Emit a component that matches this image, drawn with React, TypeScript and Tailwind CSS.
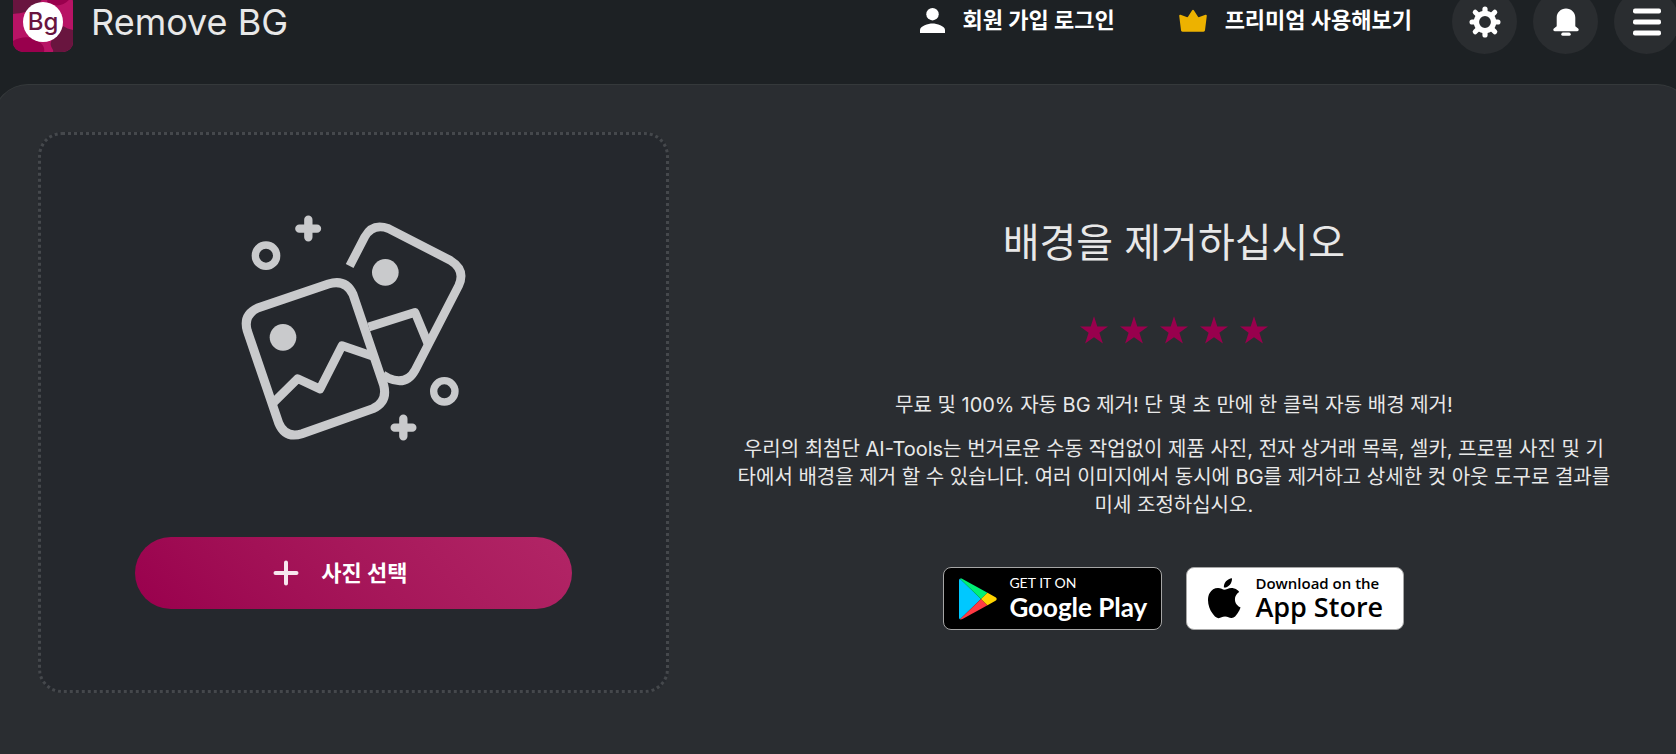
import type { ReactNode } from 'react'

interface IconProps {
  className?: string
}

function UserIcon({ className }: IconProps): ReactNode {
  return (
    <svg className={className} viewBox="0 0 25 25" fill="currentColor" aria-hidden="true">
      <circle cx="12.5" cy="6.2" r="6.2" />
      <path d="M0 25v-3c0-4.200 8.300-6.600 12.500-6.600S25 17.800 25 22v3z" />
    </svg>
  )
}

function CrownIcon({ className }: IconProps): ReactNode {
  return (
    <svg className={className} viewBox="0 0 28 24" fill="currentColor" aria-hidden="true">
      <path d="M13 1.500a1.200 1.200 0 0 1 2 0l4 6.300c.3.500.8.600 1.300.3L26.500 5.800c.7-.3 1.400.2 1.300 1L26 21.300c-.1.900-.6 1.400-1.500 1.400h-21c-.9 0-1.400-.5-1.500-1.400L.2 6.800c-.1-.8.600-1.300 1.300-1l6.200 2.300c.5.3 1 .2 1.300-.3z" />
    </svg>
  )
}

function GearIcon({ className }: IconProps): ReactNode {
  return (
    <svg className={className} viewBox="-16 -16 32 32" fill="none" aria-hidden="true">
      <circle r="8.600" stroke="currentColor" strokeWidth="5.400" />
      <g stroke="currentColor" strokeWidth="5.200" strokeLinecap="round">
        <path d="M0-10V-12.900M0 10V12.900M-10 0H-12.900M10 0H12.900" />
        <path d="M7.500-7.500 9.800-9.800M7.500 7.500 9.800 9.800M-7.500-7.500-9.800-9.800M-7.500 7.500-9.800 9.800" strokeWidth="5" />
      </g>
    </svg>
  )
}

function BellIcon({ className }: IconProps): ReactNode {
  return (
    <svg className={className} viewBox="0 0 26 28" fill="currentColor" aria-hidden="true">
      <path d="M13 .5c5.200 0 9.300 4 9.300 9.200v8.500l2.800 2.400c1.100 1 .6 2.700-.9 2.700H1.800c-1.500 0-2-1.700-.9-2.700l2.800-2.400V9.700C3.700 4.500 7.800.5 13 .5z" />
      <rect x="8.300" y="24.600" width="9.400" height="3.200" rx="1.600" />
    </svg>
  )
}

function MenuIcon({ className }: IconProps): ReactNode {
  return (
    <svg className={className} viewBox="0 0 28 28" fill="currentColor" aria-hidden="true">
      <rect y="0.500" width="28" height="5" rx="2" />
      <rect y="11.500" width="28" height="5" rx="2" />
      <rect y="22.500" width="28" height="5" rx="2" />
    </svg>
  )
}

function PlusIcon({ className }: IconProps): ReactNode {
  return (
    <svg className={className} viewBox="0 0 26 26" stroke="currentColor" strokeWidth="4" strokeLinecap="round" aria-hidden="true">
      <path d="M13 2.500v21M2.500 13h21" />
    </svg>
  )
}

function StarIcon({ className }: IconProps): ReactNode {
  return (
    <svg className={className} viewBox="0 0 28 28" fill="currentColor" aria-hidden="true">
      <path d="M14 .2l3.300 10.200h10.700l-8.600 6.300L22.900 27.600 14 21.200 5.100 27.600l3.500-10.900L0 10.400h10.700z" />
    </svg>
  )
}

function Logo(): ReactNode {
  return (
    <span className="relative flex size-15 shrink-0 items-center justify-center overflow-hidden rounded-[10px] bg-[#b81365]">
      <svg className="absolute inset-0 size-full" viewBox="0 0 60 60" aria-hidden="true">
        <path d="M0 0h31c-1 5-2 9-6 13-7 7-16 8-25 9z" fill="#69153f" />
        <path d="M34 10c8 6 19 4 24-5l2-5H36z" fill="#99004d" />
        <path d="M60 38c-4-1-7-2-10-4-4 9-14 12-12 20 1 3 3 4 2 6h20z" fill="#69153f" />
        <path d="M0 49c8-5 19-5 25 0 5 3 7 7 6 11H0z" fill="#99004d" />
      </svg>
      <span className="relative flex size-10 items-center justify-center rounded-full bg-white text-2xl leading-none font-medium text-[#69153f]">
        Bg
      </span>
    </span>
  )
}

function PhotosIllustration({ className }: IconProps): ReactNode {
  return (
    <svg className={className} viewBox="56 40 690 690" fill="none" stroke="#c9cacc" aria-hidden="true">
      {/* front photo */}
      <path
        d="M115 325 327 253Q379 237 401 284L493 556Q506 606 461 627L248 702Q198 718 178 670L84 394Q70 346 115 325Z"
        strokeWidth="27"
      />
      <path d="M160 611 235 537 302 568 368 438 462 470" strokeWidth="26" strokeLinejoin="round" />
      <circle cx="191" cy="413" r="40" fill="#c9cacc" stroke="none" />
      {/* back photo */}
      <path
        d="M391 199 436 112Q460 69 508 87L693 182Q740 211 718 258L588 510Q562 559 508 536L491 526"
        strokeWidth="26"
      />
      <path d="M448 382 587 338 625 430" strokeWidth="26" strokeLinejoin="round" />
      <circle cx="498" cy="218" r="40" fill="#c9cacc" stroke="none" />
      {/* sparkles */}
      <circle cx="140" cy="168" r="32" strokeWidth="22" />
      <circle cx="675" cy="575" r="32" strokeWidth="22" />
      <path d="M267 60v53M240 87h53M552 657v53M526 684h53" strokeWidth="25" strokeLinecap="round" />
    </svg>
  )
}

function PlayLogo({ className }: IconProps): ReactNode {
  return (
    <svg className={className} viewBox="0 0 38 42" aria-hidden="true">
      <path d="M1 .8C.3 1.200 0 1.800 0 2.800v36.400c0 1 .3 1.600 1 2L22 21z" fill="#00c8ff" />
      <path d="M1 .8c.7-.4 1.500-.3 2.500.2L28.500 14.800 22 21z" fill="#00f076" />
      <path d="M1 41.200c.7.400 1.500.3 2.500-.2L28.500 27.200 22 21z" fill="#ff3a44" />
      <path d="M28.500 14.800 36.500 19.300c1.600.9 1.600 2.500 0 3.400L28.500 27.200 22 21z" fill="#ffd400" />
    </svg>
  )
}

function AppleLogo({ className }: IconProps): ReactNode {
  return (
    <svg className={className} viewBox="2 1 31 39" fill="currentColor" aria-hidden="true">
      <path d="M27.900 21.500c-.1-4.800 3.900-7.100 4.100-7.200-2.200-3.300-5.700-3.700-6.900-3.800-2.900-.3-5.700 1.700-7.200 1.700s-3.800-1.700-6.200-1.600c-3.200 0-6.200 1.900-7.800 4.700-3.400 5.800-.9 14.400 2.400 19.100 1.600 2.300 3.500 4.900 6 4.800 2.400-.1 3.300-1.600 6.200-1.600s3.700 1.600 6.300 1.500c2.600 0 4.200-2.300 5.800-4.700 1.800-2.700 2.600-5.300 2.600-5.400-.1 0-5.200-2-5.300-7.500z" />
      <path d="M23.100 7.400C24.400 5.800 25.300 3.500 25.100 1.200c-2 .1-4.300 1.300-5.700 2.900-1.200 1.400-2.300 3.800-2 6 2.200.2 4.400-1.100 5.700-2.700z" />
    </svg>
  )
}

interface RoundButtonProps {
  label: string
  children: ReactNode
}

function RoundButton({ label, children }: RoundButtonProps): ReactNode {
  return (
    <button
      type="button"
      aria-label={label}
      className="flex size-[65px] shrink-0 items-center justify-center rounded-full bg-[#2a2d30] text-white"
    >
      {children}
    </button>
  )
}

function Header(): ReactNode {
  return (
    <header className="-mt-[11px] -mr-[3px] mb-[30px] flex items-center pl-[13px] text-[22px] font-bold text-white">
      <a href="#" className="flex items-center gap-[18px] text-[36px] leading-[44px] font-normal text-[#e8e8e8]">
        <Logo />
        Remove BG
      </a>
      <nav className="ml-auto flex items-center gap-16 pb-0.5">
        <a href="#" className="flex items-center gap-[18px] whitespace-nowrap">
          <UserIcon className="size-[25px]" />
          회원 가입 로그인
        </a>
        <a href="#" className="flex items-center gap-[18px] whitespace-nowrap">
          <CrownIcon className="h-6 w-7 text-[#edb200]" />
          프리미엄 사용해보기
        </a>
      </nav>
      <div className="ml-10 flex gap-4">
        <RoundButton label="설정">
          <GearIcon className="size-8" />
        </RoundButton>
        <RoundButton label="알림">
          <BellIcon className="h-7 w-[26px]" />
        </RoundButton>
        <RoundButton label="메뉴">
          <MenuIcon className="size-7" />
        </RoundButton>
      </div>
    </header>
  )
}

function UploadBox(): ReactNode {
  return (
    <section className="flex flex-col items-center rounded-3xl border-3 border-dotted border-[#45484c] bg-[#25282d] pt-[78px] pb-[81px]">
      <PhotosIllustration className="size-[230px]" />
      <button
        type="button"
        className="mt-[94px] flex h-18 w-[70%] items-center justify-center gap-[22px] rounded-full bg-linear-45 from-[#99004d] to-[#b22566] pr-[26px] text-[22px] font-bold text-white"
      >
        <PlusIcon className="size-[26px] text-[#f7e6ee]" />
        사진 선택
      </button>
    </section>
  )
}

function StoreBadges(): ReactNode {
  return (
    <div className="mt-12 flex gap-6 text-left">
      <a
        href="#"
        className="flex h-[63px] w-[219px] items-center gap-3 rounded-lg border border-[#a6a6a6] bg-black pl-[15px] text-white"
      >
        <PlayLogo className="h-[42px] w-[38px] shrink-0" />
        <span className="flex flex-col whitespace-nowrap">
          <span className="font-['Lato',sans-serif] text-[14px] leading-4">GET IT ON</span>
          <span className="font-['Lato',sans-serif] text-[26px] leading-8 font-bold">Google Play</span>
        </span>
      </a>
      <a
        href="#"
        className="flex h-[63px] w-[218px] items-center gap-[14px] rounded-lg border border-[#a6a6a6] bg-white pl-5 text-black"
      >
        <AppleLogo className="h-[41px] w-[34px] shrink-0" />
        <span className="flex flex-col whitespace-nowrap">
          <span className="font-['Open_Sans',sans-serif] text-[15px] leading-4 font-semibold">Download on the</span>
          <span className="font-['Open_Sans',sans-serif] text-[27px] leading-8 font-semibold">App Store</span>
        </span>
      </a>
    </div>
  )
}

function Intro(): ReactNode {
  return (
    <section className="flex flex-col items-center px-7 pt-[83px] text-center text-xl leading-7 text-[#e8e8e8]">
      <h1 className="text-[40px] leading-14">배경을 제거하십시오</h1>
      <div className="mt-[45px] flex gap-3 text-[#99004d]">
        {[1, 2, 3, 4, 5].map((n) => (
          <StarIcon key={n} className="size-7" />
        ))}
      </div>
      <p className="mt-[47px]">무료 및 100% 자동 BG 제거! 단 몇 초 만에 한 클릭 자동 배경 제거!</p>
      <p className="mt-4">
        우리의 최첨단 AI-Tools는 번거로운 수동 작업없이 제품 사진, 전자 상거래 목록, 셀카, 프로필 사진 및 기<br />
        타에서 배경을 제거 할 수 있습니다. 여러 이미지에서 동시에 BG를 제거하고 상세한 컷 아웃 도구로 결과를 미세
        조정하십시오.
      </p>
      <StoreBadges />
    </section>
  )
}

function App(): ReactNode {
  return (
    <div
      lang="ko"
      className="flex min-h-screen flex-col overflow-hidden bg-[#1d2124] font-['Inter','Noto_Sans_CJK_KR',sans-serif]"
    >
      <Header />
      <main className="-mr-4 -ml-[7px] grid flex-1 grid-cols-[2fr_3fr] items-start gap-8 rounded-t-[35px] border border-b-0 border-[#35393b] bg-[#2a2d31] px-11 pt-[47px] pb-14">
        <UploadBox />
        <Intro />
      </main>
    </div>
  )
}

export default App
